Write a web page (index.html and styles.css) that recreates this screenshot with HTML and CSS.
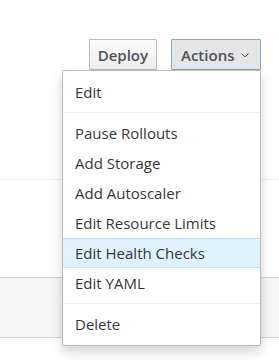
FILE: index.html
```html
<!DOCTYPE html>
<html>
<head>
  <title>Deployment</title>
  <link rel="stylesheet" href="styles.css">
</head>
<body>
  <div class="toolbar">
    <button class="btn">Deploy</button>
    <div class="actions">
      <button class="btn btn-open">Actions
        <svg class="caret" width="8" height="5" viewBox="0 0 8 5"><path d="M0.5 0.5 L4 4 L7.5 0.5" fill="none" stroke="#4d5258" stroke-width="1"/></svg>
      </button>
      <ul class="menu">
        <li>Edit</li>
        <li class="divider"></li>
        <li>Pause Rollouts</li>
        <li>Add Storage</li>
        <li>Add Autoscaler</li>
        <li>Edit Resource Limits</li>
        <li class="hover">Edit Health Checks</li>
        <li>Edit YAML</li>
        <li class="divider"></li>
        <li>Delete</li>
      </ul>
    </div>
  </div>

  <div class="content">
    <div class="row top"></div>
    <div class="row band"></div>
  </div>
</body>
</html>
```

FILE: styles.css
```css
body {
  margin: 0;
  min-height: 360px;
  font-family: 'Open Sans', 'Liberation Sans', sans-serif;
  font-size: 15px;
  color: #363636;
  background: #fff;
}

.toolbar {
  display: flex;
  justify-content: flex-end;
  align-items: flex-start;
  gap: 14px;
  padding: 39px 18px 0 0;
  height: 31px;
  position: relative;
  z-index: 2;
}

.btn {
  height: 31px;
  padding: 0 8px;
  font-family: inherit;
  font-size: 15px;
  font-weight: 600;
  color: #4d5258;
  background: linear-gradient(#fafafa, #ededed);
  border: 1px solid #bbb;
  border-radius: 1px;
  display: flex;
  align-items: center;
  gap: 7px;
}

.btn-open {
  width: 90px;
  padding: 0 9px;
  background: #e5e5e5;
  border-color: #7fa7d8;
}

.caret {
  margin-top: 2px;
}

.actions {
  position: relative;
}

.menu {
  position: absolute;
  top: 100%;
  right: 0;
  width: 197px;
  margin: 0;
  padding: 6px 0;
  list-style: none;
  background: #fff;
  border: 1px solid #bbb;
  border-radius: 1px;
  box-shadow: 0 6px 12px rgba(0,0,0,0.175);
}

.menu li {
  height: 30px;
  line-height: 30px;
  padding: 0 12px;
  white-space: nowrap;
}

.menu li.hover {
  background: #def3ff;
  height: 28px;
  line-height: 28px;
  border-top: 1px solid #bee1f4;
  border-bottom: 1px solid #bee1f4;
}

.menu li.divider {
  height: 1px;
  margin: 5px 0;
  padding: 0;
  background: #ededed;
}

.content {
  margin-top: 109px;
}

.row.top {
  height: 97px;
  border-top: 1px solid #ececec;
}

.row.band {
  height: 59px;
  background: #f5f5f5;
  border-top: 1px solid #d1d1d1;
  border-bottom: 1px solid #d1d1d1;
}
```
